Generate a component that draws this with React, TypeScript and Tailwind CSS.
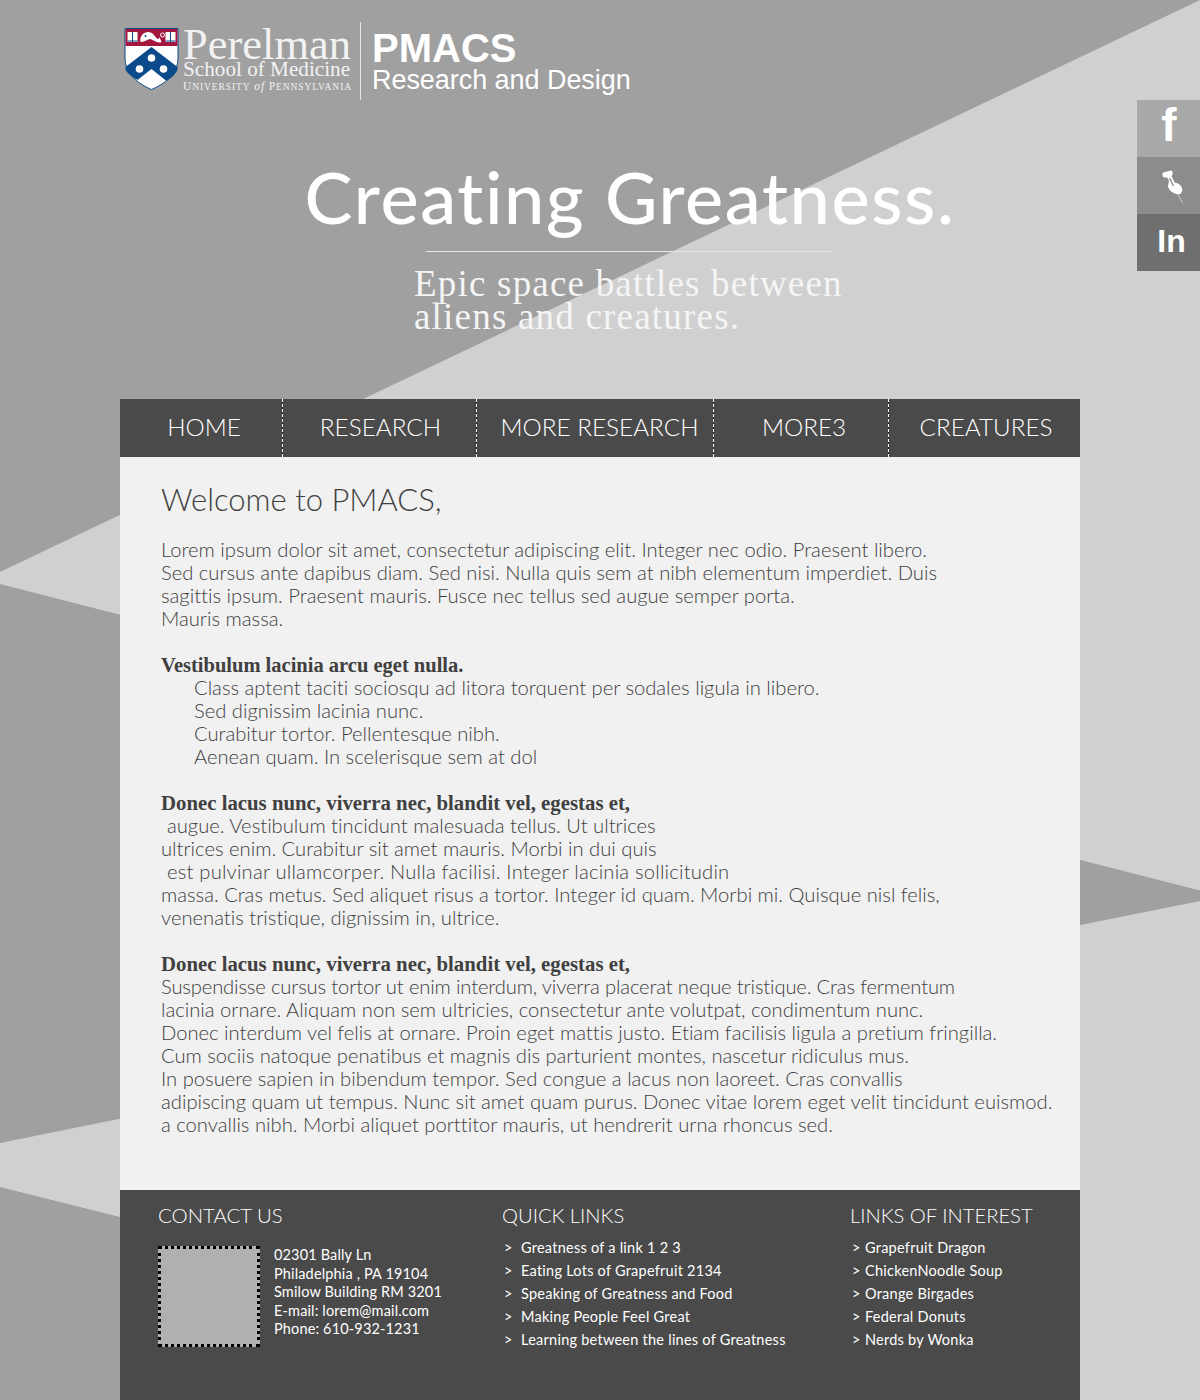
const navItems = [
  { label: "HOME", width: "w-[163px]", pad: "pl-[6px]" },
  { label: "RESEARCH", width: "w-[194px]", pad: "pl-[2px]" },
  { label: "MORE RESEARCH", width: "w-[237px]", pad: "pl-[9px]" },
  { label: "MORE3", width: "w-[175px]", pad: "pl-[6px]" },
  { label: "CREATURES", width: "w-[191px]", pad: "pl-[3px]" },
];

const quickLinks = [
  "Greatness of a link 1 2 3",
  "Eating Lots of Grapefruit 2134",
  "Speaking of Greatness and Food",
  "Making People Feel Great",
  "Learning between the lines of Greatness",
];

const interestLinks = [
  "Grapefruit Dragon",
  "ChickenNoodle Soup",
  "Orange Birgades",
  "Federal Donuts",
  "Nerds by Wonka",
];

function Background() {
  return (
    <svg className="absolute inset-0" width="1200" height="1400" viewBox="0 0 1200 1400">
      <rect width="1200" height="1400" fill="#d0d0d0" />
      <polygon points="0,0 1200,0 0,572" fill="#a0a0a0" />
      <polygon points="0,584 1200,890.6 1200,901 0,1143" fill="#a0a0a0" />
      <polygon points="0,1187 120,1217 120,1400 0,1400" fill="#a0a0a0" />
    </svg>
  );
}

function Shield() {
  return (
    <svg width="55" height="62" viewBox="0 0 54 62" className="shrink-0">
      <path d="M0.5 0.5H53.5V30C53.5 46 40 56 27 61.5C14 56 0.5 46 0.5 30Z" fill="#fff" stroke="#0b4a8b" />
      <rect x="1" y="1" width="52" height="17" fill="#a3173f" />
      <rect x="3" y="4" width="10" height="10" fill="#fff" />
      <path d="M8 4V14M3 13H13" stroke="#0b4a8b" />
      <rect x="41" y="4" width="10" height="10" fill="#fff" />
      <path d="M46 4V14M41 13H51" stroke="#0b4a8b" />
      <path d="M16 14C15 8 19 4 24 4C28 4 30 8 32 10C33 12 35 11 35 9L37 14C33 16 29 12 26 11C23 11 21 14 16 14Z" fill="#fff" />
      <circle cx="21" cy="8" r="1" fill="#0b4a8b" />
      <circle cx="38" cy="7" r="2" fill="none" stroke="#fff" />
      <path d="M1 39L27 19L53 39V42C51 46 47 50 42 53L27 41L13 52C7 49 3 45 1 42Z" fill="#0b4a8b" />
      <circle cx="27" cy="30" r="3.8" fill="#fff" />
      <circle cx="15" cy="41" r="3.8" fill="#fff" />
      <circle cx="39" cy="41" r="3.8" fill="#fff" />
    </svg>
  );
}

function PinIcon() {
  return (
    <svg width="24" height="36" viewBox="0 0 24 36">
      <path d="M2 4.5L10 2.5C12 3 12.5 6 10.5 8L14 15C16 15 18 15.5 19 17C22 20 22 24 19 26C15 27 9 24 7 19C7 16 8 14 8 12.5L6 9.5L3 9.5C1 8.5 1 6 2 4.5Z" fill="#fff" />
      <path d="M8.5 10L12.5 18" stroke="#8c8c8c" strokeWidth="1.4" />
      <path d="M17 26L21.5 35" stroke="#d5d5d5" strokeWidth="0.8" />
    </svg>
  );
}

function SocialTabs() {
  return (
    <div className="absolute right-0 top-[100px] w-[63px] flex flex-col text-white font-['Liberation_Sans',sans-serif] font-bold">
      <div className="h-[57px] bg-[#a9a9a9] flex justify-center text-[46px] leading-[50px] pl-[1px]">f</div>
      <div className="h-[57px] bg-[#8c8c8c] flex items-center justify-center pl-[8px]">
        <PinIcon />
      </div>
      <div className="h-[57px] bg-[#6f6f6f] flex justify-center text-[32px] leading-[54px] pl-[6px]">In</div>
    </div>
  );
}

function Header() {
  return (
    <header className="h-[399px] flex flex-col">
      <div className="flex items-start pl-1 pt-[22px] text-white">
        <div className="pt-[6px]">
          <Shield />
        </div>
        <div className="ml-[4px] w-[170px] h-[78px] font-['Liberation_Serif',serif] text-[#f2f2f2]">
          <div className="text-[44.5px] leading-[40px] pt-[2px] whitespace-nowrap">Perelman</div>
          <div className="text-[21.2px] leading-[20px] -mt-[5px] whitespace-nowrap">School of Medicine</div>
          <div className="text-[11.5px] leading-[14px] tracking-[0.9px] whitespace-nowrap">
            U<span className="text-[9.5px]">NIVERSITY</span> <i>of</i> P<span className="text-[9.5px]">ENNSYLVANIA</span>
          </div>
        </div>
        <div className="ml-[7px] w-px h-[78px] bg-[#e8e8e8]" />
        <div className="ml-[11px] pt-[4px] font-['Liberation_Sans',sans-serif]">
          <div className="text-[40px] leading-[44px] font-bold">PMACS</div>
          <div className="text-[27px] leading-[28px] -mt-[4px] tracking-[-0.05px]">Research and Design</div>
        </div>
      </div>
      <div className="w-[646px] ml-[187px] mt-[48px] flex flex-col items-center text-white">
        <h1 className="text-[72px] leading-[96px] tracking-[1.6px] whitespace-nowrap font-medium font-['Lato',sans-serif]">Creating Greatness.</h1>
        <div className="w-[406px] h-px bg-[#e6e6e6] mt-[7px] -ml-[2px]" />
      </div>
      <p className="ml-[294px] mt-[15px] text-[37px] leading-[33px] text-[#f5f5f5] font-['Liberation_Serif',serif] tracking-[1.2px]">
        Epic space battles between
        <br />
        aliens and creatures.
      </p>
    </header>
  );
}

function Nav() {
  return (
    <nav className="h-[58px] bg-[#4a4a4a] flex text-white text-[24.3px] font-light font-['Lato',sans-serif]">
      {navItems.map((item, i) => (
        <div key={item.label} className={`${item.width} flex`}>
          <div className={`flex-1 flex items-center justify-center whitespace-nowrap pb-[2px] ${item.pad}`}>{item.label}</div>
          {i < navItems.length - 1 && (
            <div className="w-px bg-[repeating-linear-gradient(to_bottom,#fff_0,#fff_3px,#222_3px,#222_5px)]" />
          )}
        </div>
      ))}
    </nav>
  );
}

function Content() {
  return (
    <main className="h-[733px] bg-[#f1f1f1] pl-[41px] pt-[22px] text-[#404040] font-['Lato',sans-serif] font-light text-[20.2px] leading-[23px] whitespace-nowrap">
      <h2 className="text-[31px] leading-[40px]">Welcome to PMACS,</h2>
      <p className="mt-[19px]">
        Lorem ipsum dolor sit amet, consectetur adipiscing elit. Integer nec odio. Praesent libero.
        <br />
        Sed cursus ante dapibus diam. Sed nisi. Nulla quis sem at nibh elementum imperdiet. Duis
        <br />
        sagittis ipsum. Praesent mauris. Fusce nec tellus sed augue semper porta.
        <br />
        Mauris massa.
      </p>
      <h3 className="mt-[24px] text-[20.5px] leading-[22px] font-bold font-['Liberation_Serif',serif]">Vestibulum lacinia arcu eget nulla.</h3>
      <p className="pl-[33px]">
        Class aptent taciti sociosqu ad litora torquent per sodales ligula in libero.
        <br />
        Sed dignissim lacinia nunc.
        <br />
        Curabitur tortor. Pellentesque nibh.
        <br />
        Aenean quam. In scelerisque sem at dol
      </p>
      <h3 className="mt-[23px] text-[20.8px] font-bold font-['Liberation_Serif',serif]">Donec lacus nunc, viverra nec, blandit vel, egestas et,</h3>
      <p>
        <span className="pl-[6px]">augue. Vestibulum tincidunt malesuada tellus. Ut ultrices</span>
        <br />
        ultrices enim. Curabitur sit amet mauris. Morbi in dui quis
        <br />
        <span className="pl-[6px] tracking-[0.2px]">est pulvinar ullamcorper. Nulla facilisi. Integer lacinia sollicitudin</span>
        <br />
        massa. Cras metus. Sed aliquet risus a tortor. Integer id quam. Morbi mi. Quisque nisl felis,
        <br />
        venenatis tristique, dignissim in, ultrice.
      </p>
      <h3 className="mt-[23px] text-[20.8px] font-bold font-['Liberation_Serif',serif]">Donec lacus nunc, viverra nec, blandit vel, egestas et,</h3>
      <p>
        <span className="tracking-[-0.15px]">Suspendisse cursus tortor ut enim interdum, viverra placerat neque tristique. Cras fermentum</span>
        <br />
        lacinia ornare. Aliquam non sem ultricies, consectetur ante volutpat, condimentum nunc.
        <br />
        Donec interdum vel felis at ornare. Proin eget mattis justo. Etiam facilisis ligula a pretium fringilla.
        <br />
        Cum sociis natoque penatibus et magnis dis parturient montes, nascetur ridiculus mus.
        <br />
        In posuere sapien in bibendum tempor. Sed congue a lacus non laoreet. Cras convallis
        <br />
        adipiscing quam ut tempus. Nunc sit amet quam purus. Donec vitae lorem eget velit tincidunt euismod.
        <br />
        a convallis nibh. Morbi aliquet porttitor mauris, ut hendrerit urna rhoncus sed.
      </p>
    </main>
  );
}

function Footer() {
  return (
    <footer className="h-[210px] bg-[#4a4a4a] flex text-white font-['Lato',sans-serif] whitespace-nowrap">
      <div className="w-[382px] pl-[38px] pt-[12px]">
        <h4 className="text-[20.4px] leading-[26px] font-light">CONTACT US</h4>
        <div className="flex mt-[18px]">
          <div className="w-[102px] h-[101px] bg-[#b0b0b0] border-[3px] border-dotted border-black" />
          <div className="ml-[14px] text-[14.5px] leading-[18.5px] tracking-[0.15px]">
            <div>02301 Bally Ln</div>
            <div>Philadelphia , PA 19104</div>
            <div>Smilow Building RM 3201</div>
            <div>E-mail: lorem@mail.com</div>
            <div>Phone: 610-932-1231</div>
          </div>
        </div>
      </div>
      <div className="w-[348px] pt-[12px]">
        <h4 className="text-[20.2px] leading-[26px] font-light">QUICK LINKS</h4>
        <ul className="mt-[8px] text-[14.5px] leading-[23px] tracking-[0.25px]">
          {quickLinks.map((link) => (
            <li key={link} className="flex pl-[2px]">
              <span className="w-[17px]">&gt;</span>
              {link}
            </li>
          ))}
        </ul>
      </div>
      <div className="pt-[12px]">
        <h4 className="text-[20.2px] leading-[26px] font-light">LINKS OF INTEREST</h4>
        <ul className="mt-[8px] text-[14.5px] leading-[23px] tracking-[0.25px]">
          {interestLinks.map((link) => (
            <li key={link} className="flex pl-[2px]">
              <span className="w-[13px]">&gt;</span>
              {link}
            </li>
          ))}
        </ul>
      </div>
    </footer>
  );
}

export default function App() {
  return (
    <div className="relative w-[1200px] h-[1400px] overflow-hidden [font-variant-ligatures:none]">
      <Background />
      <div className="relative w-[960px] ml-[120px]">
        <Header />
        <Nav />
        <Content />
        <Footer />
      </div>
      <SocialTabs />
    </div>
  );
}
